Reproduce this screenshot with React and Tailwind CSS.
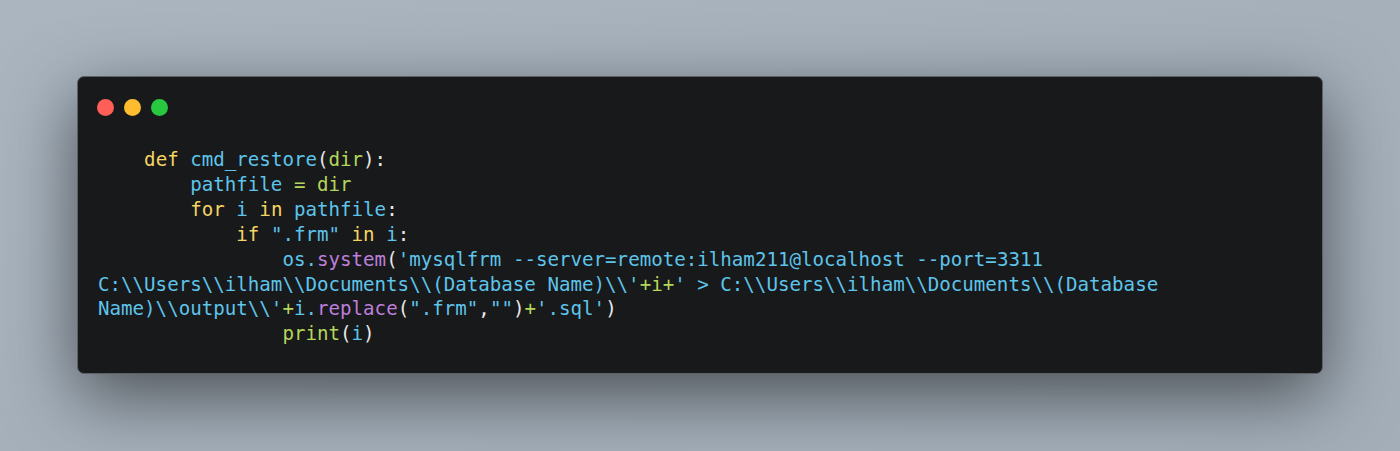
import React from "react";

const Y = "text-[#f6d463]"; // keywords
const C = "text-[#5ec4ea]"; // names, strings
const G = "text-[#b4d65a]"; // args, operators
const P = "text-[#bd7fdb]"; // methods
const W = "text-[#e8e8e8]"; // punctuation

const lines = [
  [["    ", W], ["def", Y], [" cmd_restore", C], ["(", W], ["dir", G], ["):", W]],
  [["        ", W], ["pathfile", C], [" = ", G], ["dir", G]],
  [["        ", W], ["for", Y], [" i ", C], ["in", Y], [" pathfile", C], [":", W]],
  [["            ", W], ["if", Y], [' ".frm" ', C], ["in", Y], [" i", C], [":", W]],
  [
    ["                ", W],
    ["os.", C],
    ["system", P],
    ["(", W],
    ["'mysqlfrm --server=remote:ilham211@localhost --port=3311 C:\\\\Users\\\\ilham\\\\Documents\\\\(Database Name)\\\\'", C],
    ["+i+", G],
    ["' > C:\\\\Users\\\\ilham\\\\Documents\\\\(Database Name)\\\\output\\\\'", C],
    ["+", G],
    ["i.", C],
    ["replace", P],
    ["(", W],
    ['".frm"', C],
    [",", W],
    ['""', C],
    [")", W],
    ["+", G],
    ["'.sql'", C],
    [")", W],
  ],
  [["                ", W], ["print", G], ["(", W], ["i", C], [")", W]],
];

export default function App() {
  return (
    <div className="h-[451px] w-[1400px] overflow-hidden bg-gradient-to-br from-[#aab5c0] via-[#a5b0bb] to-[#a3aeb9] pt-[76px] pl-[77px]">
      <div className="w-[1246px] h-[298px] rounded-[7px] border border-[#5c6168] bg-[#18191b] shadow-[0_22px_70px_rgba(0,0,0,0.55)]">
        {/* window buttons */}
        <div className="flex gap-[10px] pl-[19px] pt-[22px]">
          <span className="w-[17px] h-[17px] rounded-full bg-[#ff5f57]" />
          <span className="w-[17px] h-[17px] rounded-full bg-[#febc2e]" />
          <span className="w-[17px] h-[17px] rounded-full bg-[#28c840]" />
        </div>

        {/* code */}
        <pre
          className="mt-[32px] px-[20px] whitespace-pre-wrap text-[19.15px] leading-[24.9px]"
          style={{ fontFamily: '"DejaVu Sans Mono", "Liberation Mono", monospace' }}
        >
          {lines.map((line, i) => (
            <div key={i}>
              {line.map(([txt, cls], j) => (
                <span key={j} className={cls}>
                  {txt}
                </span>
              ))}
            </div>
          ))}
        </pre>
      </div>
    </div>
  );
}
